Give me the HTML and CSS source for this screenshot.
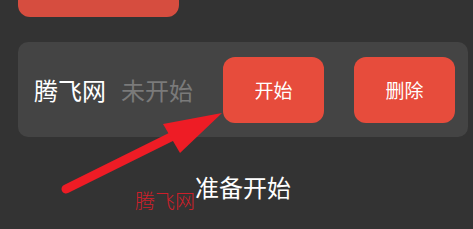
FILE: index.html
```html
<!DOCTYPE html>
<html lang="zh-CN">
<head>
<meta charset="utf-8">
<link rel="stylesheet" href="styles.css">
</head>
<body>
<div class="page">
  <div class="top-btn"></div>
  <div class="card">
    <span class="name">腾飞网</span>
    <span class="status">未开始</span>
    <button class="btn btn-start">开始</button>
    <button class="btn btn-delete">删除</button>
  </div>
  <div class="ready">准备开始</div>
  <div class="watermark">腾飞网</div>
  <svg class="arrow" width="473" height="229" viewBox="0 0 473 229">
    <line x1="66" y1="189" x2="185" y2="130" stroke="#ee1c25" stroke-width="9" stroke-linecap="round"/>
    <polygon points="222,113 163,124 180,153" fill="#ee1c25"/>
  </svg>
</div>
</body>
</html>
```

FILE: styles.css
```css
html, body {
  margin: 0;
  padding: 0;
  background: #333333;
  width: 473px;
  height: 229px;
  overflow: hidden;
  font-family: "Noto Sans CJK SC", "Noto Sans", sans-serif;
}
.page {
  position: relative;
  width: 473px;
  height: 229px;
}
.top-btn {
  margin-left: 18px;
  width: 161px;
  height: 17px;
  background: #d64d3f;
  border-radius: 0 0 12px 12px;
}
.card {
  margin: 25px 0 0 18px;
  width: 450px;
  height: 95px;
  box-sizing: border-box;
  background: #444444;
  border-radius: 10px;
  display: flex;
  align-items: center;
  padding: 0 13px 0 16px;
}
.name {
  color: #ffffff;
  font-size: 24px;
  line-height: 30px;
}
.status {
  color: #7a7a7a;
  font-size: 24px;
  line-height: 30px;
  margin-left: 15px;
}
.btn {
  border: none;
  width: 101px;
  height: 66px;
  border-radius: 12px;
  background: #e74c3c;
  color: #ffffff;
  font-family: "Noto Sans CJK SC", "Noto Sans", sans-serif;
  font-size: 19px;
  padding: 0;
}
.btn-start {
  margin-left: 30px;
}
.btn-delete {
  margin-left: 30px;
}
.ready {
  margin: 34px 0 0 18px;
  width: 450px;
  text-align: center;
  color: #ffffff;
  font-size: 24px;
  line-height: 32px;
}
.watermark {
  position: absolute;
  left: 135px;
  top: 188px;
  color: #cc1f2a;
  font-size: 20px;
  line-height: 26px;
  font-family: "Noto Sans CJK SC", serif;
  font-weight: 300;
}
.arrow {
  position: absolute;
  left: 0;
  top: 0;
  pointer-events: none;
}
```
